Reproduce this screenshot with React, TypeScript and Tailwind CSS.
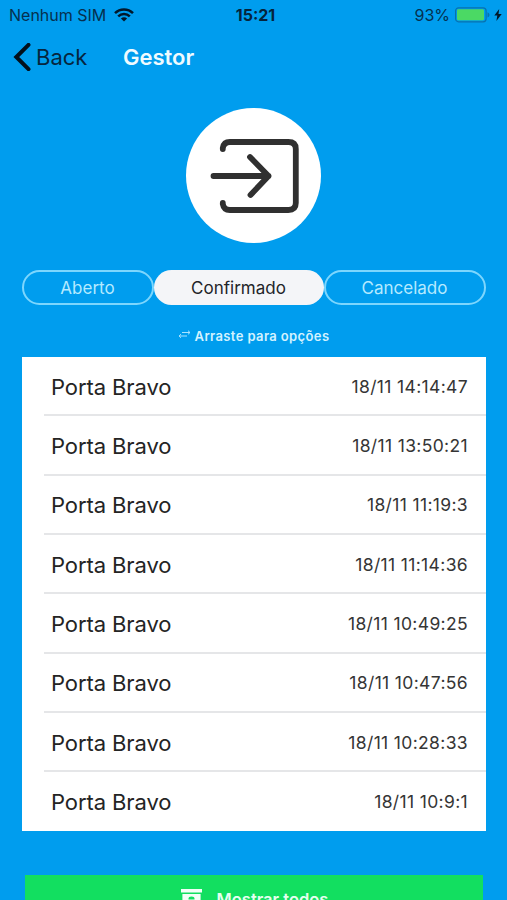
import React from 'react';

const entries = [
  '18/11 14:14:47',
  '18/11 13:50:21',
  '18/11 11:19:3',
  '18/11 11:14:36',
  '18/11 10:49:25',
  '18/11 10:47:56',
  '18/11 10:28:33',
  '18/11 10:9:1',
];

const StatusBar: React.FC = () => {
  return (
    <div className="grid h-[30px] shrink-0 grid-cols-[1fr_auto_1fr] items-center pl-[9px] pr-[5px] text-[16px] text-[#06304f]">
      <div className="flex items-center">
        <span className="w-[97px] whitespace-nowrap">Nenhum SIM</span>
        <svg className="ml-[8px]" width="20" height="14" viewBox="0 0 20 14" fill="none" stroke="#02182a" strokeWidth="2.5">
          <path d="M1 5.2C6 .2 14 .2 19 5.2" />
          <path d="M4.2 8.4c3.3-3.3 8.3-3.3 11.6 0" />
          <path d="M10 13.5 6.9 10.5c1.7-1.7 4.5-1.7 6.2 0Z" fill="#02182a" stroke="none" />
        </svg>
      </div>
      <span className="text-[16px] font-bold text-[#05243c]">15:21</span>
      <div className="flex items-center justify-end">
        <span>93%</span>
        <svg className="ml-[5px]" width="36" height="16" viewBox="0 0 36 16">
          <rect x=".6" y=".8" width="30.5" height="14" rx="3" fill="none" stroke="#0872ad" strokeWidth="1.2" />
          <rect x="2" y="2.3" width="27" height="11" rx="1.4" fill="#4bd964" />
          <path d="M32.500 5.2c2.6.8 2.6 4.4 0 5.2Z" fill="#0872ad" />
        </svg>
        <svg className="ml-[3px]" width="8" height="12" viewBox="0 0 8 12" fill="#02182a">
          <path d="M5.2 0 .3 6.6h3L2.4 12 7.7 5H4.5Z" />
        </svg>
      </div>
    </div>
  );
};

const Header: React.FC = () => {
  return (
    <header className="flex h-[54px] shrink-0 items-center pl-[13px] text-[22px]">
      <svg width="18" height="28" viewBox="0 0 18 28" fill="none" stroke="#02101c" strokeWidth="4">
        <path d="M15.5 1.8 3.3 14l12.2 12.2" strokeLinecap="round" />
      </svg>
      <span className="ml-[5px] w-[87px] text-[#06263e]">Back</span>
      <h1 className="font-semibold text-[#f0fbff]">Gestor</h1>
    </header>
  );
};

const Tabs: React.FC = () => {
  return (
    <div className="mx-auto mt-[27px] flex h-[35px] w-[464px] shrink-0 text-[17px] leading-[36px] text-[#b5eaff]">
      <button className="flex w-[132px] items-center justify-center rounded-full border-2 border-[#7dd6fd]">Aberto</button>
      <button className="w-[170px] rounded-full bg-[#f4f5f8] text-[#222428]">Confirmado</button>
      <button className="flex flex-1 items-center justify-center rounded-full border-2 border-[#7dd6fd]">Cancelado</button>
    </div>
  );
};

const EntryList: React.FC = () => {
  return (
    <ul className="ml-[22px] mt-[10px] h-[474px] w-[464px] shrink-0 bg-white pl-[22px]">
      {entries.map((date) => (
        <li
          key={date}
          className="flex h-[59.35px] items-center justify-between border-b-2 border-[#e5e6e8] pl-[7px] pr-[18px] last:border-transparent"
        >
          <span className="mt-[3px] text-[22px] tracking-[-0.1px] text-[#242424]">Porta Bravo</span>
          <span className="mt-[2px] text-[17.5px] tracking-[0.35px] text-[#353535]">{date}</span>
        </li>
      ))}
    </ul>
  );
};

export default function App() {
  return (
    <main className="flex h-[900px] w-[507px] flex-col overflow-hidden bg-[#009dee] font-['Inter',sans-serif]">
      <StatusBar />
      <Header />

      {/* Entry icon */}
      <div className="mx-auto mt-[24px] size-[135px] shrink-0 rounded-full bg-white">
        <svg width="135" height="135" viewBox="0 0 135 135" fill="none" stroke="#303030" strokeWidth="5.8" strokeLinecap="round" strokeLinejoin="round">
          <path d="M36.8 41v-1q1-6 7-6h58.5q7.5 0 7.5 7v54q0 7-7.5 7H43.8q-6 0-7-6v-1" />
          <path d="M27.5 68h55M64 49l18.500 19L64.500 87" />
        </svg>
      </div>

      <Tabs />

      <div className="mt-[21px] flex h-[21px] shrink-0 items-center justify-center text-[13px] font-semibold tracking-[0.38px] text-[#d3f2ff]">
        <svg className="mb-[4px] mr-[4px]" width="13" height="9" viewBox="0 0 13 9" fill="none" stroke="#a8e3ff" strokeWidth="1">
          <path d="M4 2.5h8M10 .7l2 1.8-2 1.8M9 6H1M3 4.2 1 6l2 1.8" />
        </svg>
        <span>Arraste para opções</span>
      </div>

      <EntryList />

      {/* Show all, cut off by the bottom of the screen */}
      <button className="ml-[25px] mt-[44px] flex h-[48px] w-[458px] shrink-0 items-center justify-center bg-[#12df60] text-[16.5px] font-semibold text-[#e6fff0]">
        <svg className="mr-[15px]" width="21" height="20" viewBox="0 0 21 20" fill="#f2fff7">
          <path d="M0 0h21v3.6H0ZM1.4 5h18.200v15H1.400ZM7.500 9.500q0-2 3-2t3 2v1h-6Z" fillRule="evenodd" />
        </svg>
        <span className="mr-[-1px]">Mostrar todos</span>
      </button>
    </main>
  );
}
